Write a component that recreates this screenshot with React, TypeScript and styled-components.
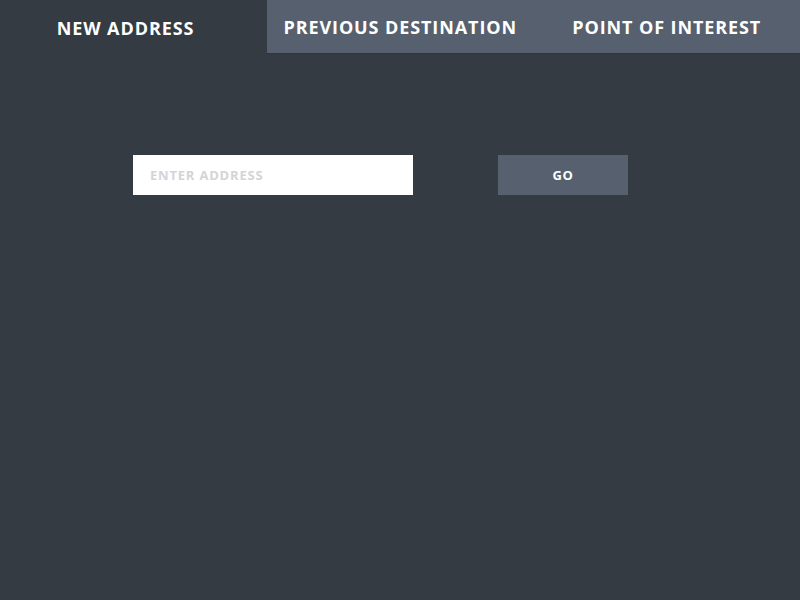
import React from 'react'
import styled, { createGlobalStyle } from 'styled-components'

const colors = {
  bg: '#353b43',
  slate: '#56606e',
  line: '#30353c',
  white: '#ffffff',
  placeholder: '#d3d4d8',
}

const GlobalStyle = createGlobalStyle`
  html, body {
    margin: 0;
    padding: 0;
    background: ${colors.bg};
    font-family: "Open Sans", "Liberation Sans", sans-serif;
  }
`

const Page = styled.div`
  width: 800px;
  height: 600px;
  background: ${colors.bg};
  display: flex;
  flex-direction: column;
`

const TabBar = styled.div`
  display: grid;
  grid-template-columns: 267px 1fr 1fr;
  height: 53px;
`

const Tab = styled.div<{ $active?: boolean }>`
  display: flex;
  align-items: center;
  justify-content: center;
  padding-top: ${p => (p.$active ? '2px' : '0')};
  padding-right: ${p => (p.$active ? '16px' : '0')};
  background: ${p => (p.$active ? colors.bg : colors.slate)};
  box-shadow: ${p => (p.$active ? 'none' : `0 1px 0 ${colors.line}`)};
  color: ${colors.white};
  font-size: 18px;
  font-weight: 700;
  letter-spacing: 0.9px;
  text-transform: uppercase;
`

const SearchRow = styled.div`
  display: flex;
  align-items: center;
  gap: 85px;
  padding: 102px 0 0 133px;
`

const AddressInput = styled.input`
  width: 280px;
  height: 40px;
  box-sizing: border-box;
  border: none;
  outline: none;
  padding: 0 17px;
  background: ${colors.white};
  font-family: inherit;
  font-size: 13px;
  font-weight: 700;
  letter-spacing: 0.8px;
  text-transform: uppercase;

  &::placeholder {
    color: ${colors.placeholder};
  }
`

const GoButton = styled.button`
  width: 130px;
  height: 40px;
  border: none;
  background: ${colors.slate};
  color: ${colors.white};
  font-family: inherit;
  font-size: 13px;
  font-weight: 700;
  letter-spacing: 0.5px;
`

const tabs = ['New Address', 'Previous Destination', 'Point of Interest']

const App = () => (
  <Page>
    <GlobalStyle />
    <TabBar>
      {tabs.map((t, i) => (
        <Tab key={t} $active={i === 0}>{t}</Tab>
      ))}
    </TabBar>
    <SearchRow>
      <AddressInput placeholder="Enter Address" />
      <GoButton>GO</GoButton>
    </SearchRow>
  </Page>
)

export default App
